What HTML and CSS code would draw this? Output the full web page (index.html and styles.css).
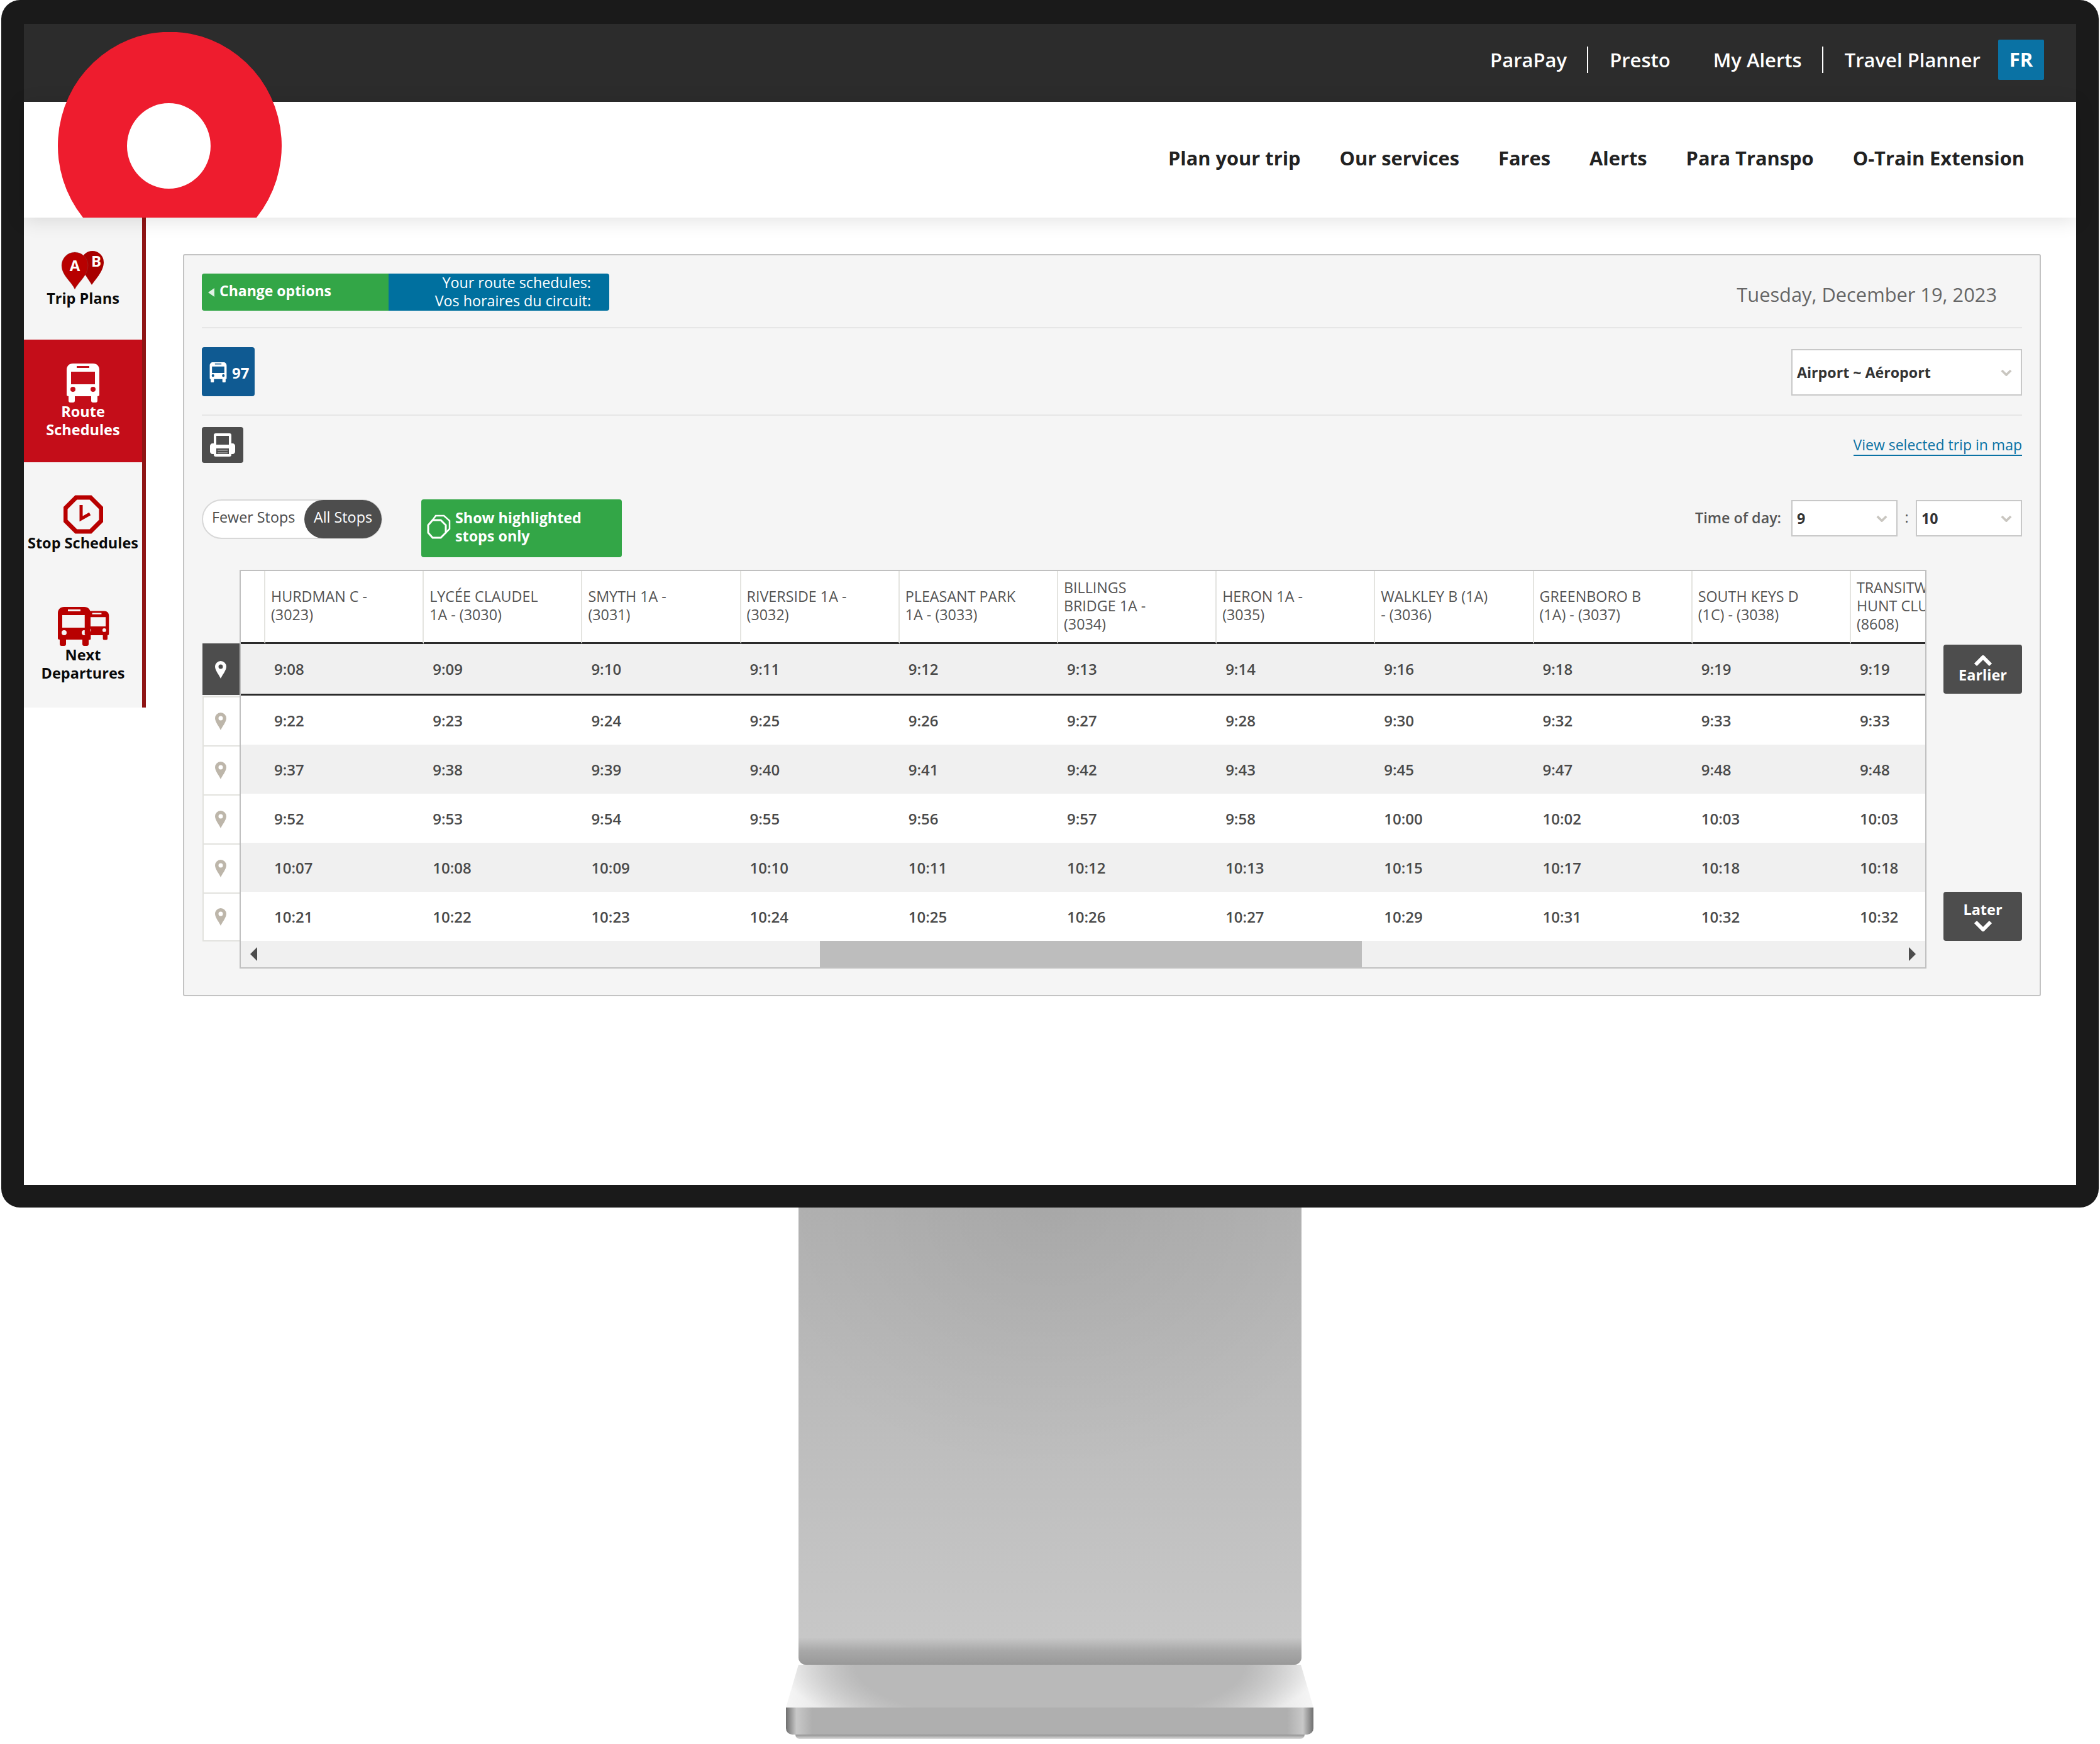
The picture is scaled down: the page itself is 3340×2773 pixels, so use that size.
FILE: index.html
```html
<!DOCTYPE html>
<html lang="en">
  <head>
    <meta charset="utf-8">
    <title>Route Schedules</title>
    <link rel="stylesheet" href="styles.css">
  </head>
  <body>
    <svg class="defs" width="0" height="0">
      <symbol id="bus" viewBox="0 0 54 62">
        <path fill="currentColor" fill-rule="evenodd" d="M11 0h32c6 0 10 4 10 10v40c0 1-1 2-3 2v7c0 2-1 3-3 3h-4c-2 0-3-1-3-3v-7H14v7c0 2-1 3-3 3H7c-2 0-3-1-3-3v-7c-2 0-3-1-3-2V10C1 4 5 0 11 0z M17 4v3h20V4z M8 13v20h38V13z M11 37a4 4 0 1 0 0 8 4 4 0 0 0 0-8z M43 37a4 4 0 1 0 0 8 4 4 0 0 0 0-8z"/>
      </symbol>
      <symbol id="pin" viewBox="0 0 18 28">
        <path fill="currentColor" fill-rule="evenodd" d="M9 28C7 23 0 15 0 9a9 9 0 0 1 18 0c0 6-7 14-9 19z M9 5.500a3.500 3.500 0 1 0 0 7 3.500 3.500 0 0 0 0-7z"/>
      </symbol>
      <symbol id="chev" viewBox="0 0 20 12">
        <path fill="none" stroke="currentColor" stroke-width="4" d="M2 10l8-8 8 8"/>
      </symbol>
      <symbol id="chev-down" viewBox="0 0 20 12">
        <path fill="none" stroke="currentColor" stroke-width="4" d="M2 2l8 8 8-8"/>
      </symbol>
    </svg>

    <div class="monitor">
      <div class="screen">
        <svg class="logo" width="356" height="295" viewBox="0 0 356 295">
          <path fill="#ee1c2e" fill-rule="evenodd" d="M40 295A178 181 0 1 1 316 295z M176.500 113a66.500 68 0 1 0 0 136 66.500 68 0 0 0 0-136z"/>
        </svg>

        <div class="topbar">
          <a class="sep">ParaPay</a>
          <a>Presto</a>
          <a class="sep">My Alerts</a>
          <a class="last">Travel Planner</a>
          <span class="lang">FR</span>
        </div>

        <nav class="mainnav">
          <a>Plan your trip</a>
          <a>Our services</a>
          <a>Fares</a>
          <a>Alerts</a>
          <a>Para Transpo</a>
          <a>O-Train Extension</a>
        </nav>

        <div class="content">
          <aside class="sidebar">
            <div class="side-item trip">
              <svg class="ico" width="70" height="62" viewBox="0 0 70 62">
                <path fill="#a80000" d="M49 55C44 46 32 33 32 19a18 18 0 0 1 36 0c0 14-13 27-19 36z"/>
                <text x="56" y="26" class="pin-letter">B</text>
                <path fill="#b80000" stroke="#7d5a5a" stroke-opacity=".35" d="M22 62C17 50 1 40 1 24a21 21 0 0 1 42 0c0 16-15 26-21 38z"/>
                <text x="22" y="33" class="pin-letter">A</text>
              </svg>
              <span>Trip Plans</span>
            </div>
            <div class="side-item active">
              <svg class="ico" width="54" height="62"><use href="#bus"/></svg>
              <span>Route<br>Schedules</span>
            </div>
            <div class="side-item stop">
              <svg class="ico" width="63" height="62" viewBox="0 0 63 62">
                <path fill="none" stroke="#b80000" stroke-width="7" d="M20 4h23l17 17v20L43 58H20L3 41V21z"/>
                <path fill="none" stroke="#b80000" stroke-width="5" d="M28 16v22l14-8"/>
              </svg>
              <span>Stop Schedules</span>
            </div>
            <div class="side-item next">
              <svg class="ico" width="84" height="62" viewBox="0 0 84 62">
                <use href="#bus" x="44" y="2" width="40" height="55"/>
                <use href="#bus" x="0" y="0" width="56" height="62"/>
              </svg>
              <span>Next<br>Departures</span>
            </div>
          </aside>

          <main class="panel">
            <section class="row row-title">
              <div class="crumb">
                <div class="crumb-back"><i class="tri-left"></i>Change options</div>
                <div class="crumb-title">Your route schedules:<br>Vos horaires du circuit:</div>
              </div>
              <div class="date">Tuesday, December 19, 2023</div>
            </section>

            <section class="row row-route">
              <div class="route-badge">
                <svg width="28" height="32"><use href="#bus"/></svg>
                <span>97</span>
              </div>
              <div class="select select-wide">
                <span>Airport ~ Aéroport</span>
                <svg width="18" height="11"><use href="#chev-down"/></svg>
              </div>
            </section>

            <section class="row-print">
              <button class="print" type="button">
                <svg width="40" height="37" viewBox="0 0 40 37">
                  <path fill="#fff" fill-rule="evenodd" d="M9 0h22c2 0 3 1 3 3v13h2c2 0 4 2 4 4v9c0 2-2 4-4 4h-2v1c0 2-1 3-3 3H9c-2 0-3-1-3-3v-1H4c-2 0-4-2-4-4v-9c0-2 2-4 4-4h2V3c0-2 1-3 3-3z M10 4v14h20V4z M10 24v9h20v-9z"/>
                  <path fill="#8d8d8d" d="M12 26h16v2H12zM12 30h16v2H12z"/>
                </svg>
              </button>
              <a class="map-link">View selected trip in map</a>
            </section>

            <section class="row-controls">
              <div class="toggle">
                <span class="toggle-off">Fewer Stops</span>
                <span class="toggle-on">All Stops</span>
              </div>
              <div class="highlight">
                <svg width="38" height="39" viewBox="0 0 38 39">
                  <path fill="none" stroke="#fff" stroke-width="2.500" d="M9 9l5-7h13l9 8v13l-6 6"/>
                  <path fill="none" stroke="#fff" stroke-width="3" d="M9 9h13l8 8v12l-8 8H9l-7-8V17z"/>
                </svg>
                <span>Show highlighted<br>stops only</span>
              </div>
              <div class="timepick">
                <label>Time of day:</label>
                <div class="select select-time"><span>9</span><svg width="18" height="11"><use href="#chev-down"/></svg></div>
                <i>:</i>
                <div class="select select-time"><span>10</span><svg width="18" height="11"><use href="#chev-down"/></svg></div>
              </div>
            </section>

            <section class="schedule">
              <div class="pins">
                <div class="pin pin-now"><svg width="18" height="28"><use href="#pin"/></svg></div>
                <div class="pin"><svg width="18" height="28"><use href="#pin"/></svg></div>
                <div class="pin"><svg width="18" height="28"><use href="#pin"/></svg></div>
                <div class="pin"><svg width="18" height="28"><use href="#pin"/></svg></div>
                <div class="pin"><svg width="18" height="28"><use href="#pin"/></svg></div>
                <div class="pin"><svg width="18" height="28"><use href="#pin"/></svg></div>
              </div>

              <div class="table-wrap">
                <table>
                  <thead>
                    <tr>
                      <th class="blank"></th>
                      <th>HURDMAN C -<br>(3023)</th>
                      <th>LYCÉE CLAUDEL<br>1A - (3030)</th>
                      <th>SMYTH 1A -<br>(3031)</th>
                      <th>RIVERSIDE 1A -<br>(3032)</th>
                      <th>PLEASANT PARK<br>1A - (3033)</th>
                      <th>BILLINGS<br>BRIDGE 1A -<br>(3034)</th>
                      <th>HERON 1A -<br>(3035)</th>
                      <th>WALKLEY B (1A)<br>- (3036)</th>
                      <th>GREENBORO B<br>(1A) - (3037)</th>
                      <th>SOUTH KEYS D<br>(1C) - (3038)</th>
                      <th>TRANSITWAY<br>HUNT CLUB<br>(8608)</th>
                    </tr>
                  </thead>
                  <tbody>
                    <tr class="now"><td></td><td>9:08</td><td>9:09</td><td>9:10</td><td>9:11</td><td>9:12</td><td>9:13</td><td>9:14</td><td>9:16</td><td>9:18</td><td>9:19</td><td>9:19</td></tr>
                    <tr><td></td><td>9:22</td><td>9:23</td><td>9:24</td><td>9:25</td><td>9:26</td><td>9:27</td><td>9:28</td><td>9:30</td><td>9:32</td><td>9:33</td><td>9:33</td></tr>
                    <tr class="alt"><td></td><td>9:37</td><td>9:38</td><td>9:39</td><td>9:40</td><td>9:41</td><td>9:42</td><td>9:43</td><td>9:45</td><td>9:47</td><td>9:48</td><td>9:48</td></tr>
                    <tr><td></td><td>9:52</td><td>9:53</td><td>9:54</td><td>9:55</td><td>9:56</td><td>9:57</td><td>9:58</td><td>10:00</td><td>10:02</td><td>10:03</td><td>10:03</td></tr>
                    <tr class="alt"><td></td><td>10:07</td><td>10:08</td><td>10:09</td><td>10:10</td><td>10:11</td><td>10:12</td><td>10:13</td><td>10:15</td><td>10:17</td><td>10:18</td><td>10:18</td></tr>
                    <tr><td></td><td>10:21</td><td>10:22</td><td>10:23</td><td>10:24</td><td>10:25</td><td>10:26</td><td>10:27</td><td>10:29</td><td>10:31</td><td>10:32</td><td>10:32</td></tr>
                  </tbody>
                </table>
                <div class="scrollbar">
                  <i class="arrow-left"></i>
                  <div class="thumb"></div>
                  <i class="arrow-right"></i>
                </div>
              </div>

              <div class="paging">
                <button class="page-btn" type="button">
                  <svg width="30" height="18"><use href="#chev"/></svg>
                  Earlier
                </button>
                <button class="page-btn page-later" type="button">
                  Later
                  <svg width="30" height="18"><use href="#chev-down"/></svg>
                </button>
              </div>
            </section>
          </main>
        </div>
      </div>
    </div>

    <div class="stand">
      <div class="neck"><div class="bend"></div></div>
      <div class="base"></div>
      <div class="foot"></div>
      <div class="foot-shadow"></div>
    </div>
  </body>
</html>
```

FILE: styles.css
```css
body {
    margin: 0;
    width: 3340px;
    height: 2773px;
    overflow: hidden;
    background: #fff;
    font-family: "Open Sans", "Noto Sans", sans-serif;
    font-size: 23.300px;
    line-height: 29px;
    color: #4a4a4a;
}
.defs {
    display: block;
    height: 0;
}
svg {
    display: block;
}
button {
    font-family: inherit;
    border: 0;
}

/* monitor */
.monitor {
    box-sizing: border-box;
    width: 3336px;
    height: 1920px;
    margin: 0 2px;
    padding: 38px 36px 36px;
    background: #1a1a1a;
    border-radius: 30px;
}
.screen {
    position: relative;
    height: 1846px;
    background: #fff;
}
.logo {
    position: absolute;
    left: 54px;
    top: 13px;
    z-index: 2;
}

/* header */
.topbar {
    display: flex;
    align-items: center;
    justify-content: flex-end;
    height: 124px;
    padding: 0 51px 11px 0;
    background: #2c2c2c;
    box-sizing: border-box;
    color: #fff;
    font-size: 31px;
    font-weight: 600;
}
.topbar a {
    padding: 0 34px;
    line-height: 42px;
}
.topbar a.sep {
    padding-right: 32px;
    border-right: 2px solid #fff;
}
.topbar a.last {
    padding-right: 28px;
}
.lang {
    display: flex;
    align-items: center;
    justify-content: center;
    width: 73px;
    height: 64px;
    background: #0a72a4;
    border-radius: 2px;
    font-weight: 700;
}
.mainnav {
    display: flex;
    align-items: center;
    justify-content: flex-end;
    gap: 62px;
    height: 184px;
    box-sizing: border-box;
    padding: 0 82px 6px 0;
    color: #222;
    font-size: 30.800px;
    font-weight: 700;
    position: relative;
    z-index: 1;
    background: #fff;
    box-shadow: 0 4px 30px rgba(0, 0, 0, .12);
}

/* sidebar */
.content {
    display: flex;
    align-items: flex-start;
}
.sidebar {
    box-sizing: content-box;
    width: 188px;
    border-right: 6px solid #8f1414;
    background: #f5f5f5;
    color: #0a0a0a;
    font-weight: 700;
    text-align: center;
    line-height: 29px;
    font-size: 23.500px;
}
.side-item {
    box-sizing: border-box;
    display: flex;
    flex-direction: column;
    align-items: center;
    height: 194px;
    white-space: nowrap;
}
.side-item.trip {
    padding-top: 52px;
}
.side-item.active {
    height: 195px;
    padding-top: 38px;
    background: #c40d19;
    color: #fff;
}
.side-item.stop {
    padding-top: 52px;
}
.side-item.next {
    height: 196px;
    padding-top: 36px;
    color: #0a0a0a;
}
.side-item.next .ico {
    color: #b80000;
}
.pin-letter {
    fill: #fff;
    font-family: "Open Sans", sans-serif;
    font-size: 24px;
    font-weight: 700;
    text-anchor: middle;
}

/* panel */
.panel {
    box-sizing: border-box;
    width: 2955px;
    height: 1180px;
    margin: 58px 0 0 59px;
    padding: 29px 28px 0;
    background: #f5f5f5;
    border: 2px solid #c3c3c3;
    border-radius: 3px;
}
.row {
    display: flex;
    align-items: flex-start;
    justify-content: space-between;
    border-bottom: 2px solid #e6e6e6;
}
.row-title {
    height: 85px;
}
.row-route {
    height: 139px;
    padding-top: 30px;
    box-sizing: border-box;
}
.crumb {
    display: flex;
    height: 59px;
    color: #fff;
}
.crumb-back {
    display: flex;
    align-items: center;
    width: 297px;
    box-sizing: border-box;
    padding: 0 0 5px 10px;
    background: #33a647;
    border-radius: 4px 0 0 4px;
    font-size: 23px;
    font-weight: 700;
}
.tri-left {
    width: 0;
    height: 0;
    margin: 5px 8px 0 0;
    border: 7px solid transparent;
    border-left: 0;
    border-right: 10px solid #dff1e3;
}
.crumb-title {
    width: 351px;
    box-sizing: border-box;
    padding-right: 29px;
    background: #00709f;
    border-radius: 0 4px 4px 0;
    text-align: right;
}
.date {
    margin: 15px 40px 0 0;
    font-size: 30.800px;
    line-height: 36px;
    color: #666;
}
.route-badge {
    display: flex;
    align-items: center;
    gap: 8px;
    width: 84px;
    height: 78px;
    box-sizing: border-box;
    padding: 2px 0 0 12px;
    background: #0f5a92;
    border-radius: 4px;
    color: #fff;
    font-size: 24px;
    font-weight: 700;
}
.select {
    display: flex;
    align-items: center;
    justify-content: space-between;
    box-sizing: border-box;
    background: #fff;
    border: 2px solid #c8c8c8;
    padding: 0 14px 0 7px;
    color: #333;
    font-size: 23.200px;
    font-weight: 700;
}
.select svg {
    color: #c9c6c0;
}
.select-wide {
    width: 367px;
    height: 74px;
    margin-top: 3px;
}
.select-time {
    width: 169px;
    height: 58px;
}
.row-print {
    display: flex;
    align-items: flex-start;
    justify-content: space-between;
    height: 133px;
    padding-top: 18px;
    box-sizing: border-box;
}
.print {
    display: flex;
    align-items: center;
    justify-content: center;
    width: 66px;
    height: 57px;
    padding: 0;
    background: #4d4d4d;
    border-radius: 4px;
}
.map-link {
    margin-top: 13px;
    color: #0a72a4;
    border-bottom: 2px solid #0a72a4;
    font-size: 23px;
    line-height: 31px;
}
.row-controls {
    display: flex;
    align-items: flex-start;
    height: 112px;
}
.toggle {
    display: flex;
    box-sizing: border-box;
    width: 287px;
    height: 63px;
    background: #fff;
    border: 2px solid #d8d8d8;
    border-radius: 32px;
}
.toggle-off {
    width: 162px;
    padding: 12px 0 0 14px;
    box-sizing: border-box;
}
.toggle-on {
    flex: 1;
    margin: -1px;
    padding-top: 13px;
    background: #4d4d4d;
    border-radius: 32px;
    color: #fff;
    text-align: center;
}
.highlight {
    display: flex;
    align-items: center;
    gap: 7px;
    box-sizing: border-box;
    width: 319px;
    height: 92px;
    margin-left: 62px;
    padding: 0 0 5px 9px;
    background: #33a647;
    border-radius: 4px;
    color: #fff;
    font-weight: 700;
}
.timepick {
    display: flex;
    align-items: center;
    margin: 1px 0 0 auto;
    height: 58px;
    font-weight: 600;
    color: #555;
}
.timepick label {
    margin: 0 16px 2px 0;
}
.timepick i {
    width: 29px;
    text-align: center;
    font-style: normal;
    font-weight: 400;
    margin-top: -4px;
}

/* schedule */
.schedule {
    display: flex;
    align-items: stretch;
}
.pins {
    width: 60px;
    padding-top: 117px;
    box-sizing: border-box;
}
.pin {
    display: flex;
    align-items: center;
    justify-content: center;
    box-sizing: border-box;
    height: 78px;
    margin-left: 1px;
    padding-right: 3px;
    background: #fff;
    border: 2px solid #e2e2de;
    border-right: 0;
    border-bottom: 0;
    color: #bdb6aa;
}
.pin:last-child {
    border-bottom: 2px solid #e2e2de;
}
.pin-now {
    height: 82px;
    margin-bottom: 2px;
    background: #4d4d4d;
    border-color: #4d4d4d;
    color: #fff;
}
.table-wrap {
    box-sizing: border-box;
    width: 2683px;
    height: 634px;
    overflow: hidden;
    background: #fff;
    border: 2px solid #c0c0c0;
}
table {
    table-layout: fixed;
    width: 2813px;
    border-collapse: separate;
    border-spacing: 0;
}
th {
    box-sizing: border-box;
    width: 252.200px;
    height: 116px;
    padding: 0 0 3px 9px;
    border-right: 2px solid #e4e4e0;
    border-bottom: 3px solid #2b2b2b;
    font-weight: 400;
    text-align: left;
    white-space: nowrap;
    overflow: hidden;
    color: #555;
}
th.blank {
    width: 39px;
}
td {
    box-sizing: border-box;
    height: 78px;
    padding: 0 0 0 14px;
    font-size: 24px;
    font-weight: 600;
}
tr.alt td {
    background: #f0f0f0;
}
tr.now td {
    height: 82px;
    background: #f0f0f0;
    border-bottom: 3px solid #2b2b2b;
}
.scrollbar {
    display: flex;
    align-items: center;
    height: 42px;
    padding: 0 15px;
    background: #f0f0f0;
}
.thumb {
    width: 862px;
    height: 42px;
    margin-left: 895px;
    background: #bdbdbd;
}
.arrow-left,
.arrow-right {
    width: 0;
    height: 0;
    border: 11px solid transparent;
}
.arrow-left {
    border-left: 0;
    border-right: 11px solid #4d4d4d;
}
.arrow-right {
    margin-left: auto;
    border-right: 0;
    border-left: 11px solid #4d4d4d;
}
.paging {
    display: flex;
    flex-direction: column;
    justify-content: space-between;
    width: 125px;
    margin-left: 27px;
    padding: 119px 0 44px;
    box-sizing: border-box;
}
.page-btn {
    display: flex;
    flex-direction: column;
    align-items: center;
    justify-content: center;
    height: 78px;
    padding: 0;
    background: #4d4d4d;
    border-radius: 4px;
    color: #fff;
    font-size: 23.500px;
    line-height: 26px;
    font-weight: 700;
}
.page-later svg {
    margin-top: 4px;
}

/* stand */
.stand {
    display: flex;
    flex-direction: column;
    align-items: center;
    width: 839px;
    margin-left: 1250px;
}
.neck {
    display: flex;
    align-items: flex-end;
    width: 800px;
    height: 727px;
    background:
        radial-gradient(ellipse 520px 420px at 50% 0, rgba(0, 0, 0, .06), rgba(0, 0, 0, 0)),
        linear-gradient(#b2b2b2, #c7c7c7 94%);
    border-radius: 0 0 12px 12px;
    overflow: hidden;
}
.bend {
    width: 100%;
    height: 44px;
    background: linear-gradient(#c8c8c8, #a8a8a8 50%, #999);
}
.base {
    width: 839px;
    height: 68px;
    background:
        radial-gradient(ellipse 430px 130px at 50% 0, #b9b9b9 72%, rgba(185, 185, 185, 0) 100%),
        linear-gradient(90deg, #f6f6f6, #e6e6e6 8%, #cfcfcf 20%, #cfcfcf 80%, #e6e6e6 92%, #f6f6f6);
    clip-path: polygon(20px 0, 819px 0, 839px 100%, 0 100%);
}
.foot {
    width: 839px;
    height: 43px;
    background: linear-gradient(90deg, #6f6f6f, #c8c8c8 2%, #afafaf 5%, #afafaf 95%, #c8c8c8 98%, #6f6f6f);
    border-radius: 0 0 10px 10px;
}
.foot-shadow {
    width: 810px;
    height: 7px;
    background: linear-gradient(#8f8f8f, #dcdcdc);
    border-radius: 0 0 8px 8px;
}
```
